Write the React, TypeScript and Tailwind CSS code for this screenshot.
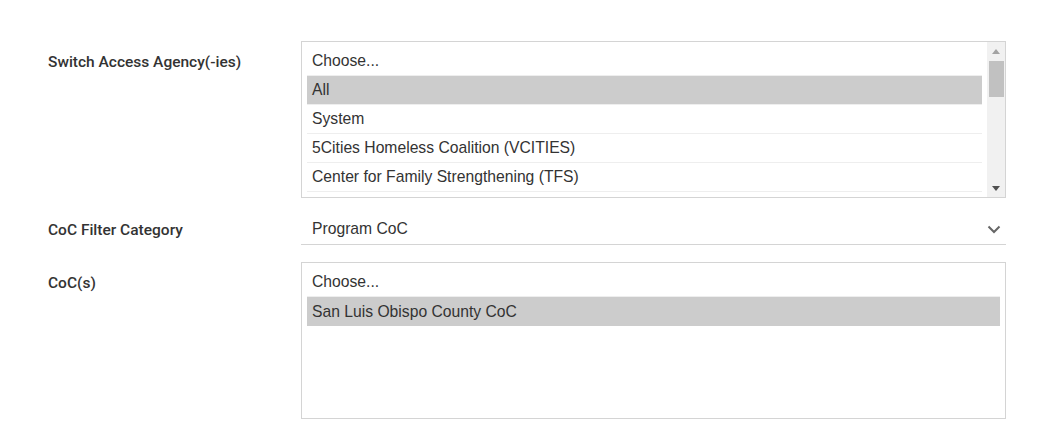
import React from "react";

const Option = ({ label, selected }: { label: string; selected?: boolean }) => (
  <div
    className={`h-[29px] pl-[5px] flex items-center text-[15.7px] leading-none text-[#333] border-b border-[#eeeeee] ${
      selected ? "bg-[#cccccc]" : ""
    }`}
  >
    {label}
  </div>
);

export default function App() {
  return (
    <div className="w-[1055px] h-[426px] bg-white relative" style={{ fontFamily: "Roboto, 'Liberation Sans', sans-serif" }}>
      <div className="pt-[41px] pl-[48px]">
        {/* Row 1 */}
        <div className="flex">
          <div className="w-[253px] pt-[12px] text-[15.5px] leading-[18px] font-medium text-[#333]">
            Switch Access Agency(-ies)
          </div>
          <div className="w-[705px] h-[157px] border border-[#d4d4d4] flex overflow-hidden" style={{ fontFamily: "'Liberation Sans', Arial, sans-serif" }}>
            <div className="flex-1 pt-[5px] pl-[5px] pr-[5px] overflow-hidden">
              <Option label="Choose..." />
              <Option label="All" selected />
              <Option label="System" />
              <Option label="5Cities Homeless Coalition (VCITIES)" />
              <Option label="Center for Family Strengthening (TFS)" />
            </div>
            <div className="w-[18px] bg-[#f1f1f1] flex flex-col items-center">
              <div className="h-[18px] flex items-center justify-center">
                <svg width="8" height="5" viewBox="0 0 8 5"><polygon points="4,0 8,5 0,5" fill="#a3a3a3" /></svg>
              </div>
              <div className="w-[15px] h-[36px] bg-[#c1c1c1] mt-[1px]" />
              <div className="flex-1" />
              <div className="h-[18px] flex items-center justify-center">
                <svg width="8" height="5" viewBox="0 0 8 5"><polygon points="0,0 8,0 4,5" fill="#505050" /></svg>
              </div>
            </div>
          </div>
        </div>

        {/* Row 2 */}
        <div className="flex mt-[11px]">
          <div className="w-[253px] pt-[12px] text-[15.5px] leading-[18px] font-medium text-[#333]">
            CoC Filter Category
          </div>
          <div className="w-[705px] h-[36px] border-b border-[#d4d4d4] flex items-center justify-between pl-[11px] pr-[5px]" style={{ fontFamily: "'Liberation Sans', Arial, sans-serif" }}>
            <span className="text-[15.7px] text-[#333] leading-none mt-[4px]">Program CoC</span>
            <svg width="14" height="9" viewBox="0 0 14 9" className="mt-[6px]">
              <polyline points="1.5,1.5 7,7 12.5,1.5" fill="none" stroke="#666" strokeWidth="2" />
            </svg>
          </div>
        </div>

        {/* Row 3 */}
        <div className="flex mt-[17px]">
          <div className="w-[253px] pt-[12px] text-[15.5px] leading-[18px] font-medium text-[#333]">
            CoC(s)
          </div>
          <div className="w-[705px] h-[157px] border border-[#d4d4d4] pt-[5px] px-[5px]" style={{ fontFamily: "'Liberation Sans', Arial, sans-serif" }}>
            <div className="h-[29px] pl-[5px] flex items-center text-[15.7px] leading-none text-[#333] border-b border-[#eeeeee]">Choose...</div>
            <div className="h-[29px] pl-[5px] flex items-center text-[15.7px] leading-none text-[#333] bg-[#cccccc]">San Luis Obispo County CoC</div>
          </div>
        </div>
      </div>
    </div>
  );
}
